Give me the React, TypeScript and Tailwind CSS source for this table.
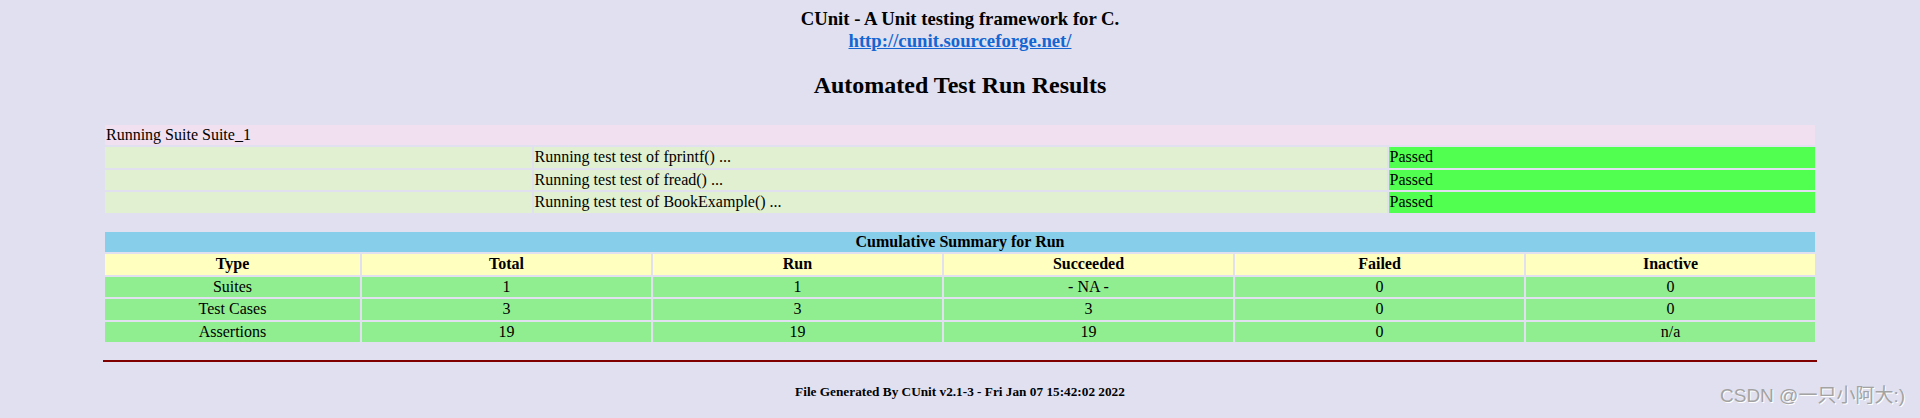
const testRows = ["fprintf()", "fread()", "BookExample()"]

const summaryHead = ["Type", "Total", "Run", "Succeeded", "Failed", "Inactive"]

const summaryRows = [
  ["Suites", "1", "1", "- NA -", "0", "0"],
  ["Test Cases", "3", "3", "3", "0", "0"],
  ["Assertions", "19", "19", "19", "0", "n/a"],
]

export default function App() {
  return (
    <div className="relative h-[418px] w-full overflow-hidden bg-[#e0e0f0] font-['Liberation_Serif',serif] leading-[normal] text-black">
      {/* header */}
      <header className="pt-[8px] text-center">
        <h3 className="text-[18.72px] font-bold">
          CUnit - A Unit testing framework for C.
          <br />
          <a href="#" className="text-[#1466d2] underline">
            http://cunit.sourceforge.net/
          </a>
        </h3>
        <h2 className="mt-[20px] text-[24px] font-bold">Automated Test Run Results</h2>
      </header>

      {/* run listing */}
      <div className="mx-auto mt-[26px] grid w-[1710px] auto-rows-[20.4px] grid-cols-[1fr_2fr_1fr] gap-[2px] text-[16px] leading-[20.4px]">
        <div className="col-span-3 bg-[#f0e0f0] px-px">Running Suite Suite_1</div>
        {testRows.map((name) => (
          <div key={name} className="contents">
            <div className="bg-[#e0f0d0]" />
            <div className="bg-[#e0f0d0] px-px">Running test test of {name} ...</div>
            <div className="bg-[#50ff50] px-px">Passed</div>
          </div>
        ))}
      </div>

      {/* cumulative summary */}
      <div className="mx-auto mt-[19.5px] grid w-[1710px] auto-rows-[20.4px] grid-cols-[255px_repeat(5,1fr)] gap-[2px] text-center text-[16px] leading-[20.4px]">
        <div className="col-span-6 bg-[#87ceeb] font-bold">Cumulative Summary for Run</div>
        {summaryHead.map((h) => (
          <div key={h} className="bg-[#ffffc0] font-bold">
            {h}
          </div>
        ))}
        {summaryRows.map((row) =>
          row.map((cell, i) => (
            <div key={row[0] + i} className="bg-[#90ee90]">
              {cell}
            </div>
          ))
        )}
      </div>

      <div className="mx-auto mt-[18px] h-[2px] w-[1714px] bg-[#800000]" />

      <h5 className="mt-[22px] text-center text-[13.28px] font-bold">
        File Generated By CUnit v2.1-3 - Fri Jan 07 15:42:02 2022
      </h5>

      {/* csdn watermark */}
      <div className="absolute right-[15px] top-[386px] font-['Liberation_Sans','Noto_Sans_CJK_SC',sans-serif] text-[19px] leading-none text-[#a3a3a3] [text-shadow:1px_1px_0_#ffffff]">
        CSDN @一只小阿大:)
      </div>
    </div>
  )
}
